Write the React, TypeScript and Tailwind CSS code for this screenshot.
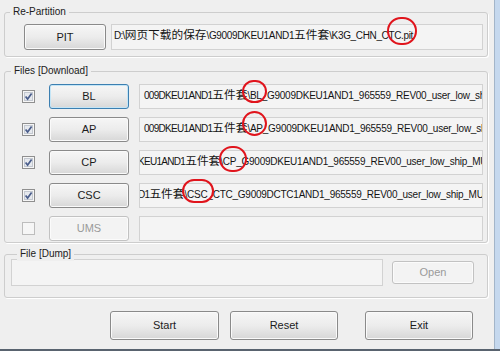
import type { ReactNode } from "react"

const sans = "font-['Liberation_Sans','Noto_Sans_CJK_SC',sans-serif]"

function C({ children }: { children: ReactNode }) {
  return <span className="text-[11.7px] tracking-normal font-['Noto_Sans_CJK_SC',sans-serif]">{children}</span>
}

function T({ children }: { children: ReactNode }) {
  return <span className="tracking-[-0.7px]">{children}</span>
}

function Btn({ children, className = "", focus = false, disabled = false }: { children: ReactNode; className?: string; focus?: boolean; disabled?: boolean }) {
  let look = "border-[#8a8a8a] bg-linear-to-b from-[#f6f6f6] via-[#ececec] to-[#d7d7d7] text-[#1b1b1b] shadow-[inset_0_0_0_1px_#fafafa]"
  if (focus) look = "border-[#3c7fb1] bg-linear-to-b from-[#f6f6f6] via-[#ececec] to-[#d7d7d7] text-[#1b1b1b] shadow-[inset_0_0_0_1px_#c4e5f6]"
  if (disabled) look = "border-[#c2c2c2] bg-[#f3f3f3] text-[#9a9a9a] shadow-[inset_0_0_0_1px_#fbfbfb]"
  return (
    <div className={`flex items-center justify-center rounded-[3px] border text-[11px] ${look} ${className}`}>
      {children}
    </div>
  )
}

function Field({ children, className = "" }: { children?: ReactNode; className?: string }) {
  return (
    <div className={`overflow-hidden whitespace-nowrap border border-[#d2d2d2] bg-[#f4f4f4] pt-[2px] text-[10px] leading-[14px] tracking-[-0.3px] text-[#141414] ${className}`}>
      {children}
    </div>
  )
}

function Check({ checked = true }: { checked?: boolean }) {
  return (
    <svg width="13" height="13" viewBox="0 0 13 13" className="shrink-0">
      <rect x="0.5" y="0.5" width="12" height="12" fill="#f6f6f6" stroke={checked ? "#8f8f8f" : "#bdbdbd"} />
      {checked && <rect x="2.5" y="2.5" width="8" height="8" fill="#e6e9ee" stroke="#c3c8d0" />}
      {checked && <path d="M3.6 6.4 L5.6 9 L9.6 3.6" fill="none" stroke="#4b5e8c" strokeWidth="1.7" />}
    </svg>
  )
}

function Group({ label, labelLeft, className = "", children }: { label: string; labelLeft: string; className?: string; children: ReactNode }) {
  return (
    <div className={`relative rounded-[3px] border border-[#cdcdcd] shadow-[1px_1px_0_#ffffff] ${className}`}>
      <span className={`absolute top-[-8px] ${labelLeft} bg-[#efefef] px-[3px] text-[10px] leading-[14px] text-[#202020]`}>{label}</span>
      {children}
    </div>
  )
}

const rows = [
  { name: "BL", pre: "009DKEU1AND1", post: "\\BL_G9009DKEU1AND1_965559_REV00_user_low_ship_MULTI", shift: "pl-[4px]", focus: true },
  { name: "AP", pre: "009DKEU1AND1", post: "\\AP_G9009DKEU1AND1_965559_REV00_user_low_ship_MULTI", shift: "pl-[4px]", focus: false },
  { name: "CP", pre: "KEU1AND1", post: "\\CP_G9009DKEU1AND1_965559_REV00_user_low_ship_MULTI", shift: "-ml-[2px]", focus: false },
  { name: "CSC", pre: "D1", post: "\\CSC_CTC_G9009DCTC1AND1_965559_REV00_user_low_ship_MULTI", shift: "-ml-[2px]", focus: false },
]

export default function App() {
  return (
    <div className={`relative flex h-[351px] w-[500px] flex-col overflow-hidden bg-[#efefef] ${sans}`}>
      <div className="flex flex-1">
        <div className="w-[494px] pl-[4px] pr-[6px]">
          <Group label="Re-Partition" labelLeft="left-[5px]" className="mt-[12px] pl-[19px] pr-[4px] pt-[11px] pb-[6px]">
            <div className="flex h-[26px]">
              <Btn className="w-[82px]">PIT</Btn>
              <Field className="ml-[5px] flex-1 pl-[2px] tracking-[-0.35px]">
                <T>{"D:\\"}</T><C>网页下载的保存</C>{"\\G9009DKEU1AND1"}<C>五件套</C>{"\\K3G_CHN_CTC.pit"}
              </Field>
            </div>
          </Group>

          <Group label="Files [Download]" labelLeft="left-[6px]" className="mt-[14px] pl-[17px] pr-[4px] pt-[12px] pb-[1px]">
            <div className="flex flex-col gap-[8px]">
              {rows.map(r => (
                <div key={r.name} className="flex h-[25px] items-center">
                  <Check />
                  <Btn focus={r.focus} className="ml-[14px] h-[25px] w-[80px]">{r.name}</Btn>
                  <Field className="ml-[10px] h-[25px] flex-1 tracking-[-0.25px]">
                    <div className={r.shift}>
                      <T>{r.pre}</T><C>五件套</C>{r.post}
                    </div>
                  </Field>
                </div>
              ))}
              <div className="flex h-[25px] items-center">
                <Check checked={false} />
                <Btn disabled className="ml-[14px] h-[25px] w-[80px]">UMS</Btn>
                <Field className="ml-[10px] h-[25px] flex-1" />
              </div>
            </div>
          </Group>

          <Group label="File [Dump]" labelLeft="left-[12px]" className="mt-[11px] pl-[6px] pr-[13px] pt-[4px] pb-[11px]">
            <div className="flex items-center">
              <Field className="h-[27px] w-[372px]" />
              <Btn disabled className="ml-[9px] h-[23px] w-[82px]">Open</Btn>
            </div>
          </Group>

          <div className="ml-[106px] mt-[13px] flex h-[29px]">
            <Btn className="w-[109px]">Start</Btn>
            <Btn className="ml-[11px] w-[108px]">Reset</Btn>
            <Btn className="ml-[27px] w-[108px]">Exit</Btn>
          </div>
        </div>
        <div className="w-[6px] border-l border-[#a3b5c9] bg-[#c5d8ee]" />
      </div>
      <div className="h-[2px] bg-[#59636f]" />

      <div className="absolute left-[387px] top-[17px] h-[28px] w-[30px] rounded-full border-2 border-[#e0141c]" />
      <div className="absolute left-[242px] top-[80px] h-[23px] w-[25px] rounded-full border-2 border-[#e0141c]" />
      <div className="absolute left-[242px] top-[111px] h-[25px] w-[25px] rounded-full border-2 border-[#e0141c]" />
      <div className="absolute left-[219px] top-[146px] h-[26px] w-[28px] rounded-full border-2 border-[#e0141c]" />
      <div className="absolute left-[182px] top-[179px] h-[24px] w-[32px] rounded-full border-2 border-[#e0141c]" />
    </div>
  )
}
